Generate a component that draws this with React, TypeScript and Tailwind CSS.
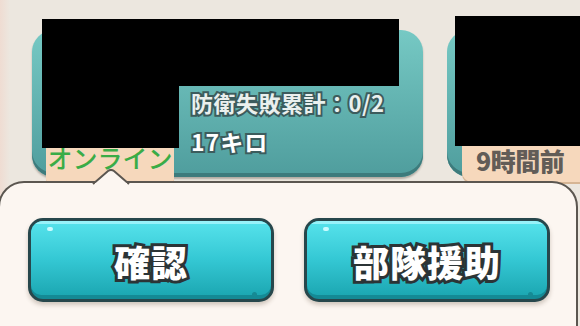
const jp = "font-['Noto_Sans_CJK_JP','Noto_Sans',sans-serif]"

function GameButton({ label }: { label: string }) {
  return (
    <button className="flex h-[84px] w-[246px] flex-col overflow-hidden rounded-[15px] border-[3px] border-[#27474c] bg-[#148a95] shadow-[0_3px_4px_rgba(80,60,40,0.25)]">
      <div className="relative flex h-[74px] w-full items-center justify-center rounded-b-[10px] bg-gradient-to-b from-[#56e3ec] via-[#35c9d5] to-[#1ca8b3] shadow-[inset_0_3px_0_rgba(180,250,255,0.7)]">
        <span className="absolute left-[16px] top-[6px] h-[4px] w-[6px] rounded-full bg-[#c8fbff]" />
        <span className="absolute bottom-[-2px] right-[14px] h-[5px] w-[5px] rounded-full bg-[#168a94]" />
        <span
          className={`${jp} mt-[6px] text-[36px] font-black leading-none tracking-[1px] text-white [-webkit-text-stroke:6px_#2b3436] [paint-order:stroke_fill]`}
        >
          {label}
        </span>
      </div>
    </button>
  )
}

export default function App() {
  return (
    <div className="relative h-[326px] w-[580px] overflow-hidden bg-[#ece7df]">
      <div className="absolute inset-y-0 left-0 w-[10px] bg-gradient-to-r from-[#efdcd2] to-transparent" />

      <div className="relative flex h-[182px] gap-[24px] pl-[32px] pt-[30px]">
        {/* card 1 */}
        <div className="relative h-[147px] w-[391px] shrink-0 rounded-[22px] bg-gradient-to-b from-[#76c9c4] to-[#4f9d9d] shadow-[inset_0_-4px_0_#3d7b7c,0_2px_2px_rgba(70,60,50,0.35)]">
          <div className="flex h-full">
            <div className="w-[159px] shrink-0" />
            <div className={`${jp} flex flex-col gap-[15px] pt-[60px] font-bold text-[#eaf0ee] [-webkit-text-stroke:4px_#3c5c5d] [paint-order:stroke_fill]`}>
              <span className="text-[22px] leading-[24px] tracking-[0.5px]">防衛失敗累計：0/2</span>
              <span className="text-[23px] leading-[24px] tracking-[1px] text-white">17キロ</span>
            </div>
          </div>
          <div className="absolute left-[14px] top-[110px] flex h-[42px] w-[128px] items-start justify-center rounded-[3px] bg-[#f6d8bc] shadow-[0_1px_0_#d9b89a]">
            <span className={`${jp} text-[25px] font-medium leading-[34px] text-[#3aac47]`}>オンライン</span>
          </div>
        </div>

        {/* card 2 */}
        <div className="relative h-[147px] w-[200px] shrink-0 rounded-[22px] bg-gradient-to-b from-[#76c9c4] to-[#4f9d9d] shadow-[inset_0_-4px_0_#3d7b7c]">
          <div className="absolute left-[15px] top-[114px] flex h-[38px] w-[140px] items-start justify-start rounded-bl-[10px] bg-[#f6d8bc] pl-[14px] pt-[1px] shadow-[0_2px_0_#d6b594]">
            <span className={`${jp} text-[25px] font-black leading-[30px] tracking-[-0.5px] text-[#625c57]`}>9時間前</span>
          </div>
        </div>

        {/* redactions */}
        <div className="absolute left-[42px] top-[19px] h-[67px] w-[357px] bg-black" />
        <div className="absolute left-[42px] top-[86px] h-[62px] w-[137px] bg-black" />
        <div className="absolute left-[455px] top-[16px] h-[130px] w-[125px] bg-black" />
      </div>

      {/* popup */}
      <div className="absolute left-[-2px] top-[181px] h-[160px] w-[580px] rounded-t-[26px] border-[2px] border-[#5b5650] bg-[#fcf6f1]">
        <svg className="absolute left-[92px] top-[-14px]" width="38" height="16" viewBox="0 0 38 16">
          <path d="M1 15 L16 2 Q19 0 22 2 L37 15 Z" fill="#fcf6f1" />
          <path d="M1 15 L16 2 Q19 0 22 2 L37 15" fill="none" stroke="#5b5650" strokeWidth="2" />
          <rect x="3" y="14" width="32" height="3" fill="#fcf6f1" />
        </svg>
        <div className="flex gap-[30px] pl-[28px] pt-[35px]">
          <GameButton label="確認" />
          <GameButton label="部隊援助" />
        </div>
      </div>
    </div>
  )
}
